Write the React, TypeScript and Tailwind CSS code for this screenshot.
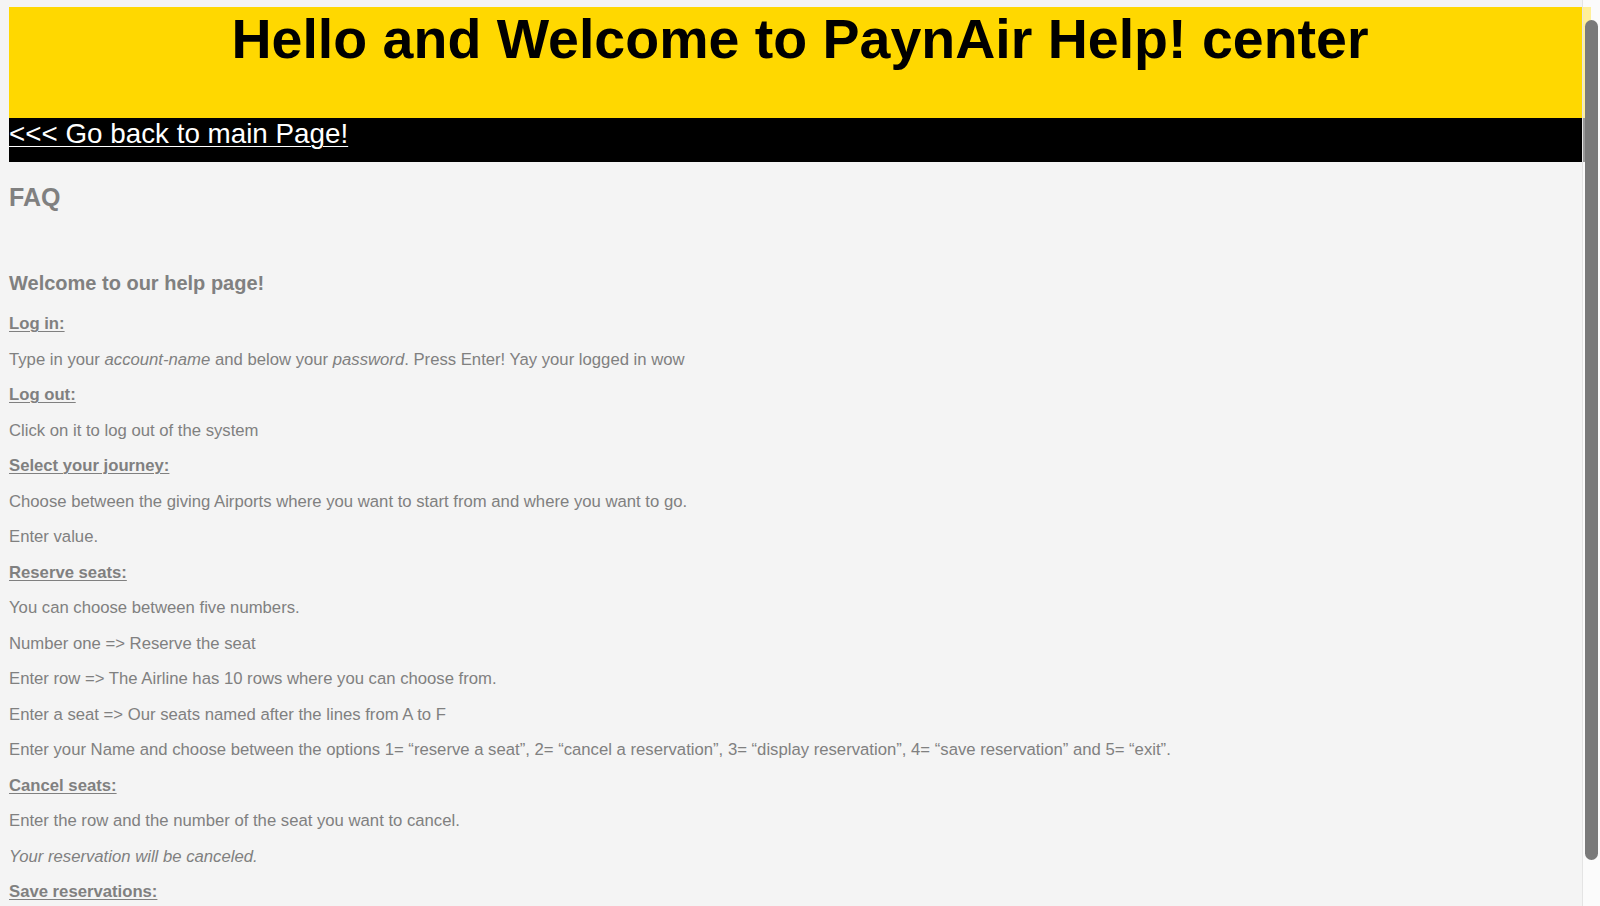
import type { ReactNode } from 'react'

type Line = { kind: 'label' | 'text'; content: ReactNode }

const lines: Line[] = [
  { kind: 'label', content: 'Log in:' },
  {
    kind: 'text',
    content: (
      <>
        Type in your <em>account-name</em> and below your <em>password</em>. Press Enter! Yay your logged in wow
      </>
    ),
  },
  { kind: 'label', content: 'Log out:' },
  { kind: 'text', content: 'Click on it to log out of the system' },
  { kind: 'label', content: 'Select your journey:' },
  { kind: 'text', content: 'Choose between the giving Airports where you want to start from and where you want to go.' },
  { kind: 'text', content: 'Enter value.' },
  { kind: 'label', content: 'Reserve seats:' },
  { kind: 'text', content: 'You can choose between five numbers.' },
  { kind: 'text', content: 'Number one => Reserve the seat' },
  { kind: 'text', content: 'Enter row => The Airline has 10 rows where you can choose from.' },
  { kind: 'text', content: 'Enter a seat => Our seats named after the lines from A to F' },
  {
    kind: 'text',
    content:
      'Enter your Name and choose between the options 1= \u201creserve a seat\u201d, 2= \u201ccancel a reservation\u201d, 3= \u201cdisplay reservation\u201d, 4= \u201csave reservation\u201d and 5= \u201cexit\u201d.',
  },
  { kind: 'label', content: 'Cancel seats:' },
  { kind: 'text', content: 'Enter the row and the number of the seat you want to cancel.' },
  { kind: 'text', content: <em>Your reservation will be canceled.</em> },
  { kind: 'label', content: 'Save reservations:' },
]

export default function App() {
  return (
    <div className="relative h-[906px] overflow-hidden bg-[#f4f4f4] font-['Liberation_Sans',Arial,sans-serif]">
      <div className="px-[9px] pt-[7px]">
        {/* Kopfbereich */}
        <header className="h-[111px] bg-[#ffd800]">
          <h1 className="text-center text-[55.5px] leading-[64px] font-bold text-black">
            Hello and Welcome to PaynAir Help! center
          </h1>
        </header>
        <nav className="h-[44px] bg-black">
          <a href="#" className="text-[27.8px] leading-[32px] text-white underline decoration-1 underline-offset-[3px]">
            &lt;&lt;&lt; Go back to main Page!
          </a>
        </nav>

        <main className="text-[#808080]">
          <h2 className="mt-[21px] text-[25px] leading-[29px] font-bold">FAQ</h2>
          <h3 className="mt-[60px] text-[20px] leading-[23px] font-bold">Welcome to our help page!</h3>
          <div className="mt-[19px] flex flex-col gap-[16.5px] text-[16.7px] leading-[19px]">
            {lines.map((line, i) =>
              line.kind === 'label' ? (
                <p key={i} className="font-bold underline decoration-1 underline-offset-[2px]">
                  {line.content}
                </p>
              ) : (
                <p key={i}>{line.content}</p>
              ),
            )}
          </div>
        </main>
      </div>

      {/* Overlay-Scrollbar wie im Screenshot */}
      <div className="absolute right-0 top-0 h-full w-[18px] border-l border-[#e4e4e4] bg-white/60">
        <div className="absolute left-[2px] top-[20px] h-[840px] w-[13px] rounded-full bg-[#7a7a7a]" />
      </div>
    </div>
  )
}
